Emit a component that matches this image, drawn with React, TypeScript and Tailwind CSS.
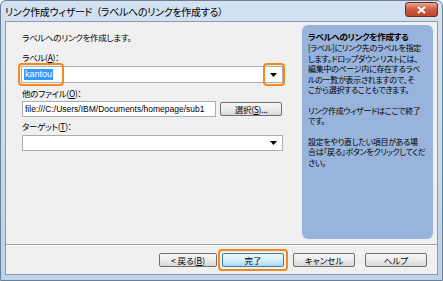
import React from "react";

const jp = "font-['Noto_Sans_CJK_JP','Liberation_Sans',sans-serif] [font-feature-settings:'palt']";

function Arrow() {
  return (
    <svg width="7" height="4" viewBox="0 0 7 4" className="block">
      <path d="M0 0h7L3.5 4z" fill="#000" />
    </svg>
  );
}

function Btn({ children, primary, w = "w-[62px]" }: { children: React.ReactNode; primary?: boolean; w?: string }) {
  return (
    <div
      className={
        `flex h-[14px] ${w} items-center justify-center rounded-[2px] border text-[8.5px] leading-none text-black ` +
        (primary
          ? "border-[#3c7fb1] bg-gradient-to-b from-[#eaf6fd] via-[#d9f0fc] to-[#a7d9f5]"
          : "border-[#707070] bg-gradient-to-b from-[#f6f6f6] via-[#ececec] to-[#d6d6d6]")
      }
    >
      {children}
    </div>
  );
}

export default function App() {
  return (
    <div className={`flex h-[281px] w-[443px] flex-col overflow-hidden rounded-t-[6px] border border-[#6d7f93] bg-gradient-to-b from-[#d3e2f2] to-[#bcd2ea] ${jp}`}>
      {/* title bar */}
      <div className="relative flex h-[20px] shrink-0 items-center pl-[4px]">
        <span className="whitespace-pre text-[10px] tracking-[-0.3px] text-black">
          リンク作成ウィザード  （ラベルへのリンクを作成する）
        </span>
        <div className="absolute right-[4px] top-[1px] flex h-[15px] w-[33px] items-center justify-center rounded-[3px] border border-[#6b2a22] bg-gradient-to-b from-[#e8a493] via-[#cf5a43] to-[#c0442c]">
          <svg width="9" height="8" viewBox="0 0 9 8">
            <path d="M1 1l7 6M8 1L1 7" stroke="#fff" strokeWidth="2" />
          </svg>
        </div>
      </div>

      {/* body */}
      <div className="mx-[4px] mb-[5px] flex flex-1 flex-col border border-[#8b9bab] bg-[#f0f0f0]">
        <div className="flex h-[222px] shrink-0">
          {/* form */}
          <div className="w-[292px] shrink-0 pl-[16px] text-[8.5px] tracking-[-0.3px] text-black">
            <div className="mt-[9px] h-[12px] leading-[12px]">ラベルへのリンクを作成します。</div>

            <div className="mt-[8px] h-[12px] leading-[12px]">
              ラベル(<span className="underline">A</span>)：
            </div>
            <div className="relative ml-[-1px] mt-[3px] flex h-[17px] w-[262px] items-center justify-between border border-[#abadb3] bg-white pl-[2px] pr-[5px]">
              <span className="bg-[#3399ff] px-[1px] font-['Liberation_Sans',sans-serif] text-[9px] leading-[11px] tracking-normal text-white">
                kantou
              </span>
              <Arrow />
              <div className="absolute left-[-4px] top-[-4px] h-[23px] w-[46px] rounded-[4px] border-2 border-[#f5891f]" />
              <div className="absolute right-[-3px] top-[-4px] h-[23px] w-[22px] rounded-[4px] border-2 border-[#f5891f]" />
            </div>

            <div className="mt-[4px] h-[12px] leading-[12px]">
              他のファイル(<span className="underline">O</span>)：
            </div>
            <div className="mt-[2px] flex items-center gap-[4px]">
              <div className="flex h-[16px] w-[194px] items-center overflow-hidden whitespace-nowrap border border-[#abadb3] bg-white pl-[2px] font-['Liberation_Sans',sans-serif] text-[8.5px] tracking-normal">
                file:///C:/Users/IBM/Documents/homepage/sub1
              </div>
              <Btn>
                選択(<span className="underline">S</span>)...
              </Btn>
            </div>

            <div className="mt-[3px] h-[12px] leading-[12px]">
              ターゲット(<span className="underline">T</span>)：
            </div>
            <div className="mt-[3px] flex h-[16px] w-[261px] items-center justify-end border border-[#abadb3] bg-white pr-[5px]">
              <Arrow />
            </div>
          </div>

          {/* help panel */}
          <div className="mb-[5px] ml-[4px] mt-[3px] w-[131px] rounded-[6px] bg-[#98b4dc] pl-[6px] pt-[6px] text-[8px] leading-[10.4px] tracking-[-0.3px] text-black">
            <div className="mb-[2px] whitespace-nowrap text-[8.5px] font-bold">ラベルへのリンクを作成する</div>
            <div className="whitespace-nowrap">
              <div>[ラベル]にリンク先のラベルを指定</div>
              <div>します。ドロップダウン リストには、</div>
              <div>編集中のページ内に存在するラベ</div>
              <div>ルの一覧が表示されますので、そ</div>
              <div>こから選択することもできます。</div>
              <div className="h-[10.4px]" />
              <div>リンク作成ウィザードはここで終了</div>
              <div>です。</div>
              <div className="h-[10.4px]" />
              <div>設定をやり直したい項目がある場</div>
              <div>合は「戻る」ボタンをクリックしてくだ</div>
              <div>さい。</div>
            </div>
          </div>
        </div>

        {/* separator */}
        <div className="h-[2px] shrink-0 border-t border-b border-t-[#a0a0a0] border-b-white" />

        {/* footer */}
        <div className="flex flex-1 items-center justify-end pr-[10px]">
          <Btn w="w-[58px]">
            &lt; 戻る(<span className="underline">B</span>)
          </Btn>
          <div className="ml-[1px] rounded-[4px] border-2 border-[#f5891f] p-[2px]">
            <Btn primary>完了</Btn>
          </div>
          <div className="ml-[5px]">
            <Btn>キャンセル</Btn>
          </div>
          <div className="ml-[10px]">
            <Btn>ヘルプ</Btn>
          </div>
        </div>
      </div>
    </div>
  );
}
